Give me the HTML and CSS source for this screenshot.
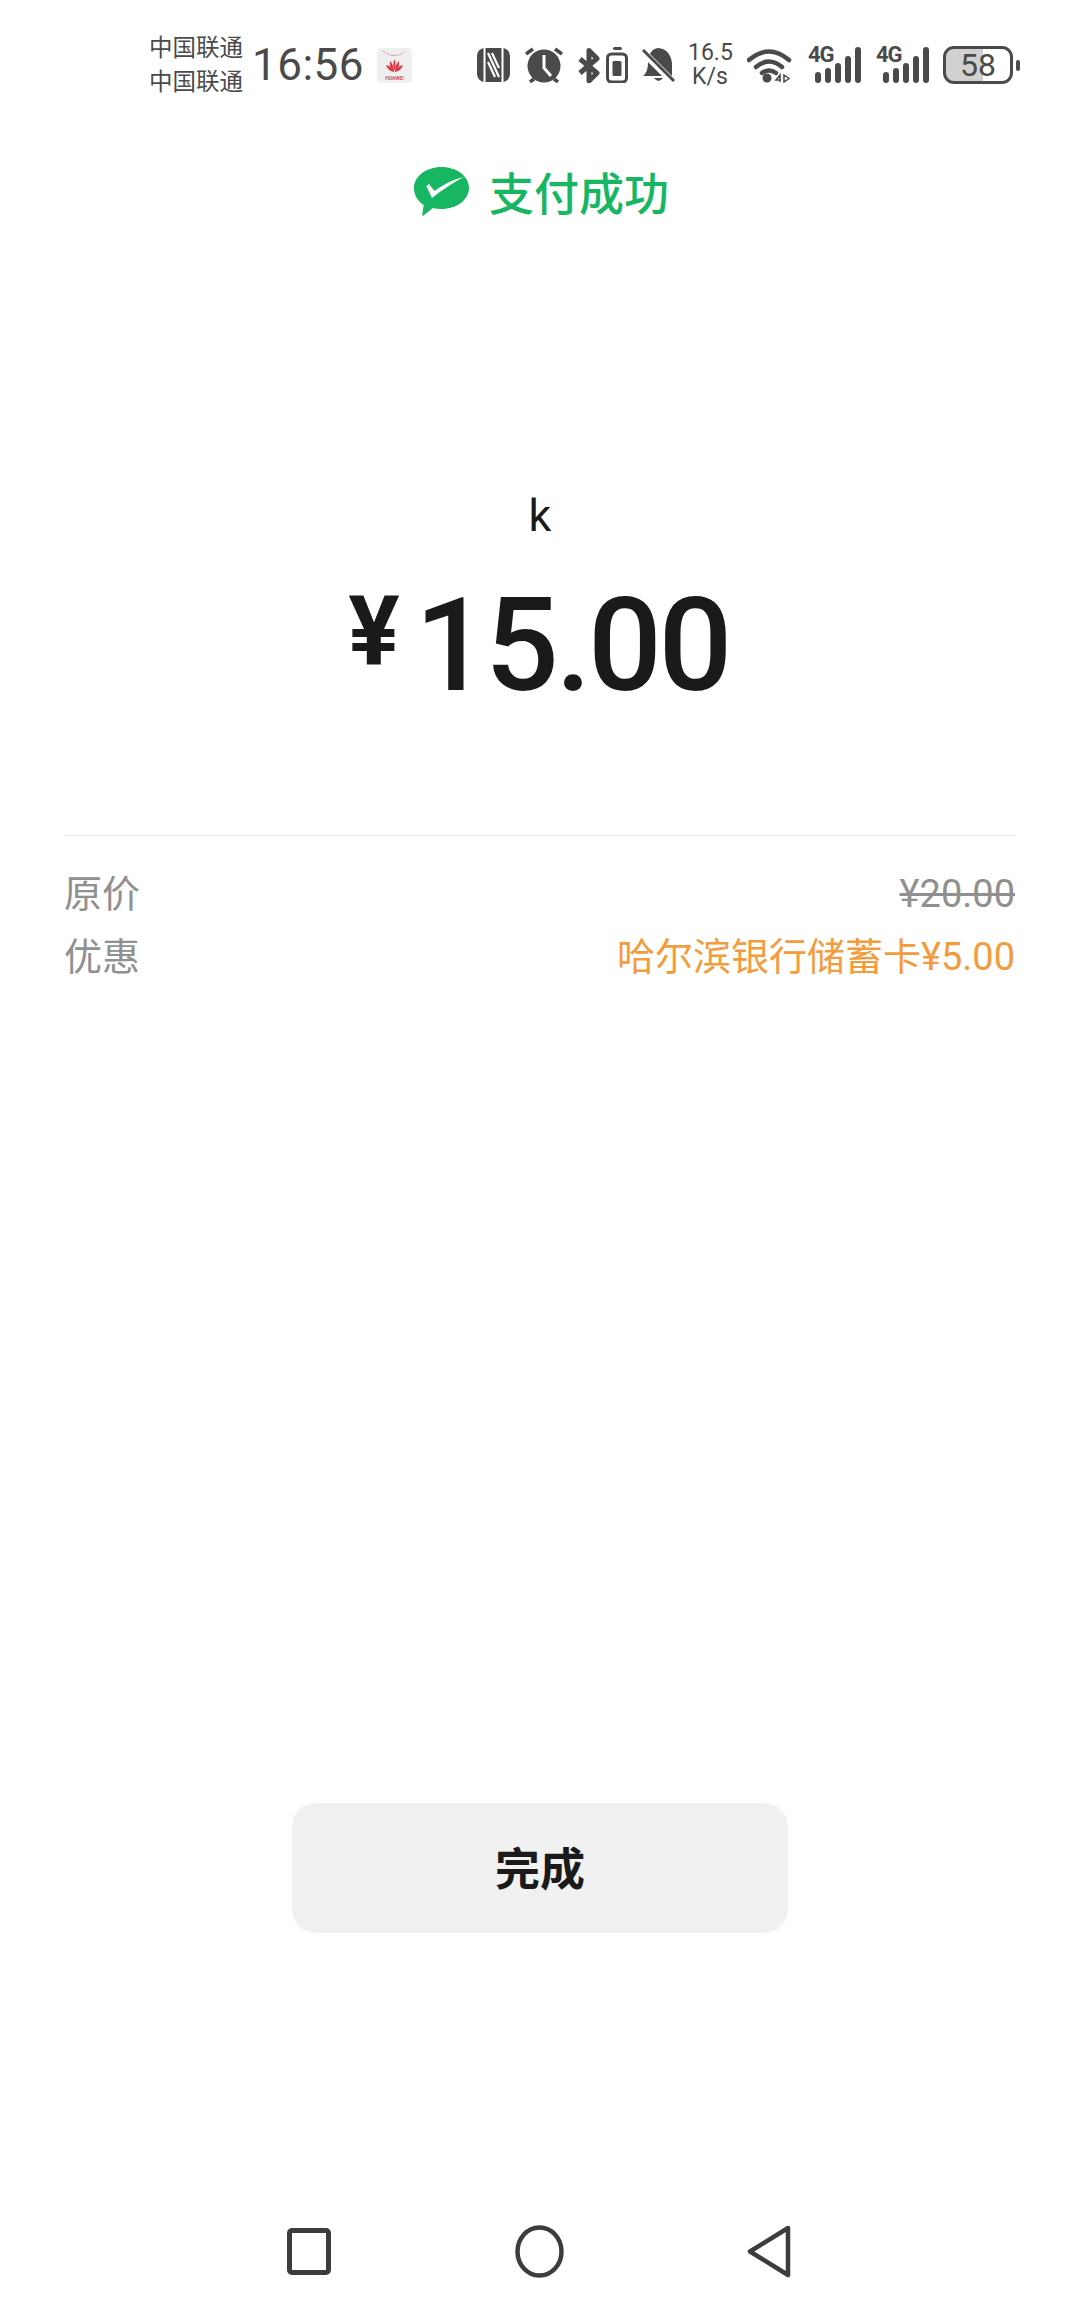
FILE: index.html
```html
<!DOCTYPE html>
<html>
  <head>
    <meta charset="utf-8" />
    <title>支付成功</title>
    <link rel="stylesheet" href="styles.css">
  </head>
  <body>
    <div class="page">
      <div class="status-bar">
        <div class="carrier">
          <span>中国联通</span>
          <span>中国联通</span>
        </div>
        <div class="time">16:56</div>
        <svg class="app-icon" width="35" height="35" viewBox="0 0 35 35">
          <rect width="35" height="35" rx="5" fill="#efefef"/>
          <path d="M6 3q11.500 9 23 0" fill="none" stroke="#d58a94" stroke-width="1" stroke-dasharray="2 1"/>
          <g fill="#dc3b48">
            <path d="M17 24q-6-1-8-7q5 1 8 7z"/>
            <path d="M17 24q-5-3-4-11q4 4 4 11z"/>
            <path d="M18 24q5-3 4-11q-4 4-4 11z"/>
            <path d="M18 24q6-1 8-7q-5 1-8 7z"/>
            <path d="M17.500 23q-2.500-6 0-12q2.500 6 0 12z"/>
          </g>
          <text class="app-label" x="17.500" y="31.500" text-anchor="middle">HUAWEI</text>
        </svg>
        <div class="status-icons">
          <svg class="ic-nfc" width="33" height="34" viewBox="0 0 33 34">
            <rect width="33" height="34" rx="8" fill="#4a4a4a"/>
            <path d="M7.500 0v34M25.500 0v34" stroke="#fff" stroke-width="2"/>
            <path d="M11 5l11 24M11 14l7 15M22 20l-7-15" stroke="#fff" stroke-width="2.200" fill="none"/>
          </svg>
          <svg class="ic-alarm" width="38" height="36" viewBox="0 0 38 36">
            <circle cx="19" cy="19" r="16.500" fill="#4a4a4a"/>
            <path d="M19 8v13l7 8" stroke="#fff" stroke-width="3" fill="none"/>
            <path d="M1 7l7-5M37 7l-7-5M9 32l-4 3M29 32l4 3" stroke="#4a4a4a" stroke-width="3.500"/>
          </svg>
          <svg class="ic-bt" width="22" height="35" viewBox="0 0 22 35">
            <path d="M2 11l17 14-8 8V2.500l8 8L2 25" fill="none" stroke="#4a4a4a" stroke-width="5" stroke-linejoin="round"/>
          </svg>
          <svg class="ic-vib" width="22" height="36" viewBox="0 0 22 36">
            <rect x="7" y="0" width="9" height="3" rx="1.500" fill="#4a4a4a"/>
            <rect x="1.500" y="7" width="19" height="28" rx="4" fill="none" stroke="#4a4a4a" stroke-width="3"/>
            <rect x="6.500" y="14" width="9" height="15" rx="1.500" fill="#4a4a4a"/>
          </svg>
          <svg class="ic-bell" width="34" height="36" viewBox="0 0 34 36">
            <path d="M16 1q12 1 14 15v13H1q5-4 5-13q1-14 10-15z" fill="#4a4a4a"/>
            <path d="M12 31h9q-4.500 6-9 0z" fill="#4a4a4a"/>
            <path d="M1 5l27 27" stroke="#fff" stroke-width="7"/>
            <path d="M1 3l31 31" stroke="#4a4a4a" stroke-width="3"/>
          </svg>
          <div class="speed">
            <span>16.5</span>
            <span>K/s</span>
          </div>
          <svg class="ic-wifi" width="47" height="36" viewBox="0 0 47 36">
            <path d="M2 13q20-17 40 0M9 20q13-11 26 0M15 26q7-5 14 0" fill="none" stroke="#4a4a4a" stroke-width="4.500" stroke-linecap="round"/>
            <circle cx="20" cy="31" r="4.500" fill="#4a4a4a"/>
            <path d="M33 35v-7l-4 5h5M37 28l5 3.500-5 3.500z" fill="none" stroke="#4a4a4a" stroke-width="1.500"/>
          </svg>
          <div class="signal">
            <span class="net">4G</span>
            <i class="bar h1"></i><i class="bar h2"></i><i class="bar h3"></i><i class="bar h4"></i><i class="bar h5"></i>
          </div>
          <div class="signal">
            <span class="net">4G</span>
            <i class="bar h1"></i><i class="bar h2"></i><i class="bar h3"></i><i class="bar h4"></i><i class="bar h5"></i>
          </div>
          <div class="battery"><span>58</span></div>
          <div class="battery-tip"></div>
        </div>
      </div>

      <div class="title-row">
        <svg width="55" height="49" viewBox="0 0 55 49">
          <path d="M27.500 0C42.700 0 55 9.300 55 21S42.700 42 27.500 42c-3 0-5.900-.4-8.600-1.100L9.500 48.600c-.7.500-1.500 0-1.300-.8l1.500-9.700C3.700 34.300 0 28 0 21 0 9.300 12.300 0 27.500 0z" fill="#17b662"/>
          <path d="M12.300 19L15 17l5.500 7C30 17 40 12 50 10 40 15 28 23 18 31z" fill="#fff"/>
        </svg>
        <span class="title">支付成功</span>
      </div>

      <div class="payee">k</div>
      <div class="amount">
        <span class="yen">¥</span>
        <span class="value">15.00</span>
      </div>

      <div class="details">
        <div class="row">
          <span class="label">原价</span>
          <span class="old-price">¥20.00</span>
        </div>
        <div class="row">
          <span class="label">优惠</span>
          <span class="discount">哈尔滨银行储蓄卡¥5.00</span>
        </div>
      </div>

      <div class="spacer"></div>
      <button class="done">完成</button>

      <div class="nav">
        <svg width="44" height="47" viewBox="0 0 44 47"><rect x="2.500" y="2.500" width="39" height="42" rx="2.500" fill="none" stroke="#3c3c3c" stroke-width="5"/></svg>
        <svg width="49" height="53" viewBox="0 0 49 53"><ellipse cx="24.500" cy="26.500" rx="22" ry="24" fill="none" stroke="#3c3c3c" stroke-width="4.500"/></svg>
        <svg width="44" height="53" viewBox="0 0 44 53"><path d="M41 3L3 26.500 41 50z" fill="none" stroke="#3c3c3c" stroke-width="4.500" stroke-linejoin="round"/></svg>
      </div>
    </div>
  </body>
</html>
```

FILE: styles.css
```css
body {
  margin: 0;
  background-color: #fff;
  font-family: "Roboto", "Noto Sans CJK SC", sans-serif;
  color: #1a1a1a;
}
.page {
  display: flex;
  flex-direction: column;
  height: 2310px;
}

/* status bar */
.status-bar {
  display: flex;
  align-items: center;
  height: 130px;
  padding-left: 149px;
  color: #4a4a4a;
}
.carrier {
  display: flex;
  flex-direction: column;
  width: 103px;
  font-size: 23.500px;
  line-height: 34px;
}
.time {
  width: 125px;
  font-size: 44px;
  letter-spacing: 0.500px;
}
.app-label {
  font-size: 5px;
  font-weight: 700;
  fill: #c9555f;
}
.status-icons {
  display: flex;
  align-items: center;
  margin-left: 65px;
}
.ic-alarm { margin-left: 15px; }
.ic-bt { margin-left: 15px; }
.ic-vib { margin-left: 6px; }
.ic-bell { margin-left: 14px; }
.speed {
  display: flex;
  flex-direction: column;
  width: 44px;
  margin-left: 12px;
  font-size: 23px;
  line-height: 24px;
  text-align: center;
}
.ic-wifi { margin-left: 15px; }
.signal {
  position: relative;
  display: flex;
  align-items: flex-end;
  gap: 4px;
  width: 54px;
  height: 36px;
  margin-left: 14px;
  padding-left: 7px;
  box-sizing: border-box;
}
.net {
  position: absolute;
  top: -4px;
  left: 0;
  font-size: 22px;
  font-weight: 700;
  line-height: 24px;
  letter-spacing: -1px;
}
.bar {
  display: block;
  flex: none;
  width: 6px;
  border-radius: 3px;
  background-color: #4a4a4a;
}
.h1 { height: 11px; }
.h2 { height: 15px; }
.h3 { height: 20px; }
.h4 { height: 27px; }
.h5 { height: 36px; }
.battery {
  display: flex;
  align-items: center;
  justify-content: center;
  box-sizing: border-box;
  width: 70px;
  height: 38px;
  margin-left: 13px;
  border: 3px solid #4a4a4a;
  border-radius: 11px;
  background: linear-gradient(to right, #d0d0d0 58%, #fff 58%);
  font-size: 32px;
}
.battery-tip {
  width: 4px;
  height: 11px;
  margin-left: 3px;
  border-radius: 2px;
  background-color: #4a4a4a;
}

/* header */
.title-row {
  display: flex;
  align-items: center;
  justify-content: center;
  gap: 20px;
  height: 122px;
  padding-left: 3px;
}
.title {
  font-size: 45px;
  font-weight: 500;
  color: #17b662;
}
.payee {
  margin-top: 239px;
  font-size: 45px;
  line-height: 50px;
  text-align: center;
}
.amount {
  display: flex;
  align-items: flex-start;
  justify-content: center;
  gap: 15px;
  margin-top: 40px;
  padding-right: 3px;
  height: 130px;
}
.yen {
  font-size: 96px;
  font-weight: 700;
  line-height: 100px;
}
.value {
  font-size: 130px;
  font-weight: 500;
  line-height: 130px;
  letter-spacing: -3.500px;
}

/* detail rows */
.details {
  margin: 124px 65px 0 64px;
  padding-top: 27px;
  border-top: 1px solid #ececec;
}
.row {
  display: flex;
  justify-content: space-between;
  font-size: 38px;
  line-height: 63px;
  color: #909090;
}
.old-price {
  text-decoration: line-through;
}
.discount {
  color: #f29c3d;
}
.spacer {
  flex: 1;
}

/* bottom */
.done {
  display: block;
  align-self: center;
  width: 496px;
  height: 130px;
  padding-bottom: 4px;
  border: none;
  border-radius: 24px;
  background-color: #f1f1f1;
  color: #1a1a1a;
  font-family: inherit;
  font-size: 45px;
  font-weight: 700;
}
.nav {
  display: flex;
  align-items: center;
  justify-content: space-between;
  height: 53px;
  margin-top: 292px;
  margin-bottom: 32px;
  padding: 0 289px 0 287px;
}
```
